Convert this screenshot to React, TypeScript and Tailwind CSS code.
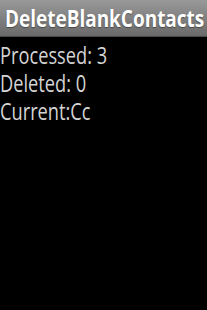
export default function App() {
  return (
    <div className="w-[207px] h-[310px] bg-black overflow-hidden" style={{ fontFamily: '"Open Sans", sans-serif' }}>
      <div className="h-[37px] bg-gradient-to-b from-[#999] to-[#6a6a6a] flex items-center pl-[5px] border-b border-[#4a4a4a]">
        <span className="inline-block origin-left scale-x-[0.79] text-white font-bold text-[24px] leading-none whitespace-nowrap [text-shadow:0_1px_1px_rgba(0,0,0,0.4)]">DeleteBlankContacts</span>
      </div>
      <div className="text-[#d4d4d4] text-[24px] leading-[28px] pt-[4px] whitespace-nowrap">
        <div className="origin-left scale-x-[0.76]">Processed: 3</div>
        <div className="origin-left scale-x-[0.76]">Deleted: 0</div>
        <div className="origin-left scale-x-[0.76]">Current:Cc</div>
      </div>
    </div>
  );
}
